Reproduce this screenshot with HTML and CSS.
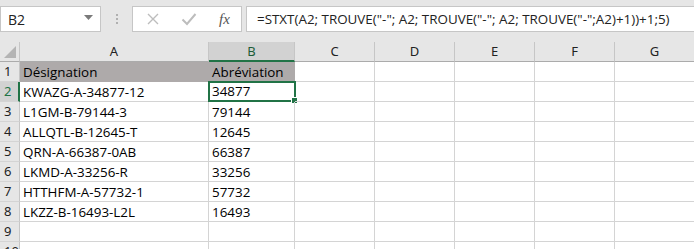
FILE: index.html
```html
<!DOCTYPE html>
<html lang="fr">
<head>
  <meta charset="UTF-8">
  <title>Feuille</title>
  <link rel="stylesheet" href="styles.css">
</head>
<body>
  <div class="barre">
    <div class="nom">
      <span>B2</span>
      <svg class="fleche" width="9" height="5" viewBox="0 0 9 5"><path d="M0 0h9L4.5 5z" fill="#7a7a7a"/></svg>
    </div>
    <div class="points"><i></i><i></i><i></i></div>
    <div class="boutons">
      <svg width="14" height="14" viewBox="0 0 14 14"><path d="M2 2l10 10M12 2L2 12" stroke="#bdbdbd" stroke-width="1.4"/></svg>
      <svg width="16" height="14" viewBox="0 0 16 14"><path d="M1.5 7.5l4.5 4.5L14.5 2" stroke="#bdbdbd" stroke-width="2" fill="none"/></svg>
      <span class="fx">fx</span>
    </div>
    <div class="formule">=STXT(A2; TROUVE("-"; A2; TROUVE("-"; A2; TROUVE("-";A2)+1))+1;5)</div>
  </div>

  <div class="feuille">
    <div class="coin"><svg width="12" height="12" viewBox="0 0 12 12"><path d="M12 0v12H0z" fill="#b4b4b4"/></svg></div>
    <div class="entete">A</div>
    <div class="entete actif">B</div>
    <div class="entete">C</div>
    <div class="entete">D</div>
    <div class="entete">E</div>
    <div class="entete">F</div>
    <div class="entete">G</div>

    <div class="num">1</div>
    <div class="cel titre">Désignation</div>
    <div class="cel titre">Abréviation</div>
    <div class="cel"></div><div class="cel"></div><div class="cel"></div><div class="cel"></div><div class="cel"></div>

    <div class="num sel">2</div>
    <div class="cel">KWAZG-A-34877-12</div>
    <div class="cel choisie">34877<b></b></div>
    <div class="cel"></div><div class="cel"></div><div class="cel"></div><div class="cel"></div><div class="cel"></div>

    <div class="num">3</div>
    <div class="cel">L1GM-B-79144-3</div>
    <div class="cel">79144</div>
    <div class="cel"></div><div class="cel"></div><div class="cel"></div><div class="cel"></div><div class="cel"></div>

    <div class="num">4</div>
    <div class="cel">ALLQTL-B-12645-T</div>
    <div class="cel">12645</div>
    <div class="cel"></div><div class="cel"></div><div class="cel"></div><div class="cel"></div><div class="cel"></div>

    <div class="num">5</div>
    <div class="cel">QRN-A-66387-0AB</div>
    <div class="cel">66387</div>
    <div class="cel"></div><div class="cel"></div><div class="cel"></div><div class="cel"></div><div class="cel"></div>

    <div class="num">6</div>
    <div class="cel">LKMD-A-33256-R</div>
    <div class="cel">33256</div>
    <div class="cel"></div><div class="cel"></div><div class="cel"></div><div class="cel"></div><div class="cel"></div>

    <div class="num">7</div>
    <div class="cel">HTTHFM-A-57732-1</div>
    <div class="cel">57732</div>
    <div class="cel"></div><div class="cel"></div><div class="cel"></div><div class="cel"></div><div class="cel"></div>

    <div class="num">8</div>
    <div class="cel">LKZZ-B-16493-L2L</div>
    <div class="cel">16493</div>
    <div class="cel"></div><div class="cel"></div><div class="cel"></div><div class="cel"></div><div class="cel"></div>

    <div class="num">9</div>
    <div class="cel"></div><div class="cel"></div>
    <div class="cel"></div><div class="cel"></div><div class="cel"></div><div class="cel"></div><div class="cel"></div>

    <div class="num">10</div>
    <div class="cel"></div><div class="cel"></div>
    <div class="cel"></div><div class="cel"></div><div class="cel"></div><div class="cel"></div><div class="cel"></div>
  </div>
</body>
</html>
```

FILE: styles.css
```css
body {
  margin: 0;
  width: 694px;
  height: 249px;
  overflow: hidden;
  background: #e6e6e6;
  font-family: 'Open Sans', sans-serif;
}

.barre {
  display: flex;
  align-items: center;
  height: 26px;
  padding: 6px 0 10px 0;
}

.nom {
  box-sizing: border-box;
  width: 101px;
  height: 26px;
  background: #fff;
  border: 1px solid #c6c6c6;
  display: flex;
  align-items: center;
  justify-content: space-between;
  padding: 0 7px 0 7px;
  font-size: 14px;
  color: #222;
}

.fleche {
  margin-bottom: 3px;
}

.points {
  width: 31px;
  display: flex;
  flex-direction: column;
  align-items: center;
  gap: 2px;
}

.points i {
  width: 2px;
  height: 2px;
  background: #b0b0b0;
}

.boutons {
  box-sizing: border-box;
  width: 110px;
  height: 26px;
  background: #fff;
  border: 1px solid #c6c6c6;
  display: flex;
  align-items: center;
  padding-left: 13px;
  gap: 21px;
}

.fx {
  font-family: 'Liberation Serif', serif;
  font-style: italic;
  font-size: 15px;
  color: #555;
  margin-left: 1px;
}

.formule {
  box-sizing: border-box;
  flex: 1;
  height: 26px;
  margin-left: 4px;
  background: #fff;
  border: 1px solid #c6c6c6;
  border-right: none;
  padding-left: 10px;
  font-size: 13.4px;
  line-height: 24px;
  color: #222;
  white-space: nowrap;
}

.feuille {
  display: grid;
  grid-template-columns: 20px 189px 86px 80px 80px 80px 80px 80px;
  grid-auto-rows: 20px;
  background: #fff;
}

.coin {
  background: #e6e6e6;
  border-right: 1px solid #c6c6c6;
  border-bottom: 1px solid #ababab;
  box-sizing: border-box;
  display: flex;
  align-items: flex-end;
  justify-content: flex-end;
  padding: 0 3px 3px 0;
}

.entete {
  box-sizing: border-box;
  background: #e6e6e6;
  border-right: 1px solid #c6c6c6;
  border-bottom: 1px solid #ababab;
  text-align: center;
  font-family: 'Noto Sans', sans-serif;
  font-size: 13px;
  line-height: 19px;
  color: #222;
}

.entete.actif {
  background: #d2d2d2;
  border-bottom: 2px solid #217346;
  color: #1e5d38;
}

.num {
  box-sizing: border-box;
  background: #e6e6e6;
  border-right: 1px solid #c6c6c6;
  border-bottom: 1px solid #d4d4d4;
  padding-left: 4px;
  font-family: 'Noto Sans', sans-serif;
  font-size: 13px;
  line-height: 19px;
  color: #222;
}

.num.sel {
  background: #d2d2d2;
  border-right: 2px solid #217346;
  color: #217346;
}

.cel {
  box-sizing: border-box;
  border-right: 1px solid #d4d4d4;
  border-bottom: 1px solid #d4d4d4;
  padding-left: 3px;
  font-size: 13.4px;
  line-height: 20px;
  color: #000;
  white-space: nowrap;
  position: relative;
}

.cel.titre {
  background: #aeaaaa;
  border-right-color: #aeaaaa;
  border-bottom-color: #aeaaaa;
}

.choisie {
  border: 2px solid #217346;
  margin: -1px 0 0 -1px;
  width: 88px;
  height: 21px;
  padding-left: 2px;
  line-height: 17px;
}

.choisie b {
  position: absolute;
  right: -4px;
  bottom: -4px;
  width: 5px;
  height: 5px;
  background: #217346;
  border: 1px solid #fff;
}
```
